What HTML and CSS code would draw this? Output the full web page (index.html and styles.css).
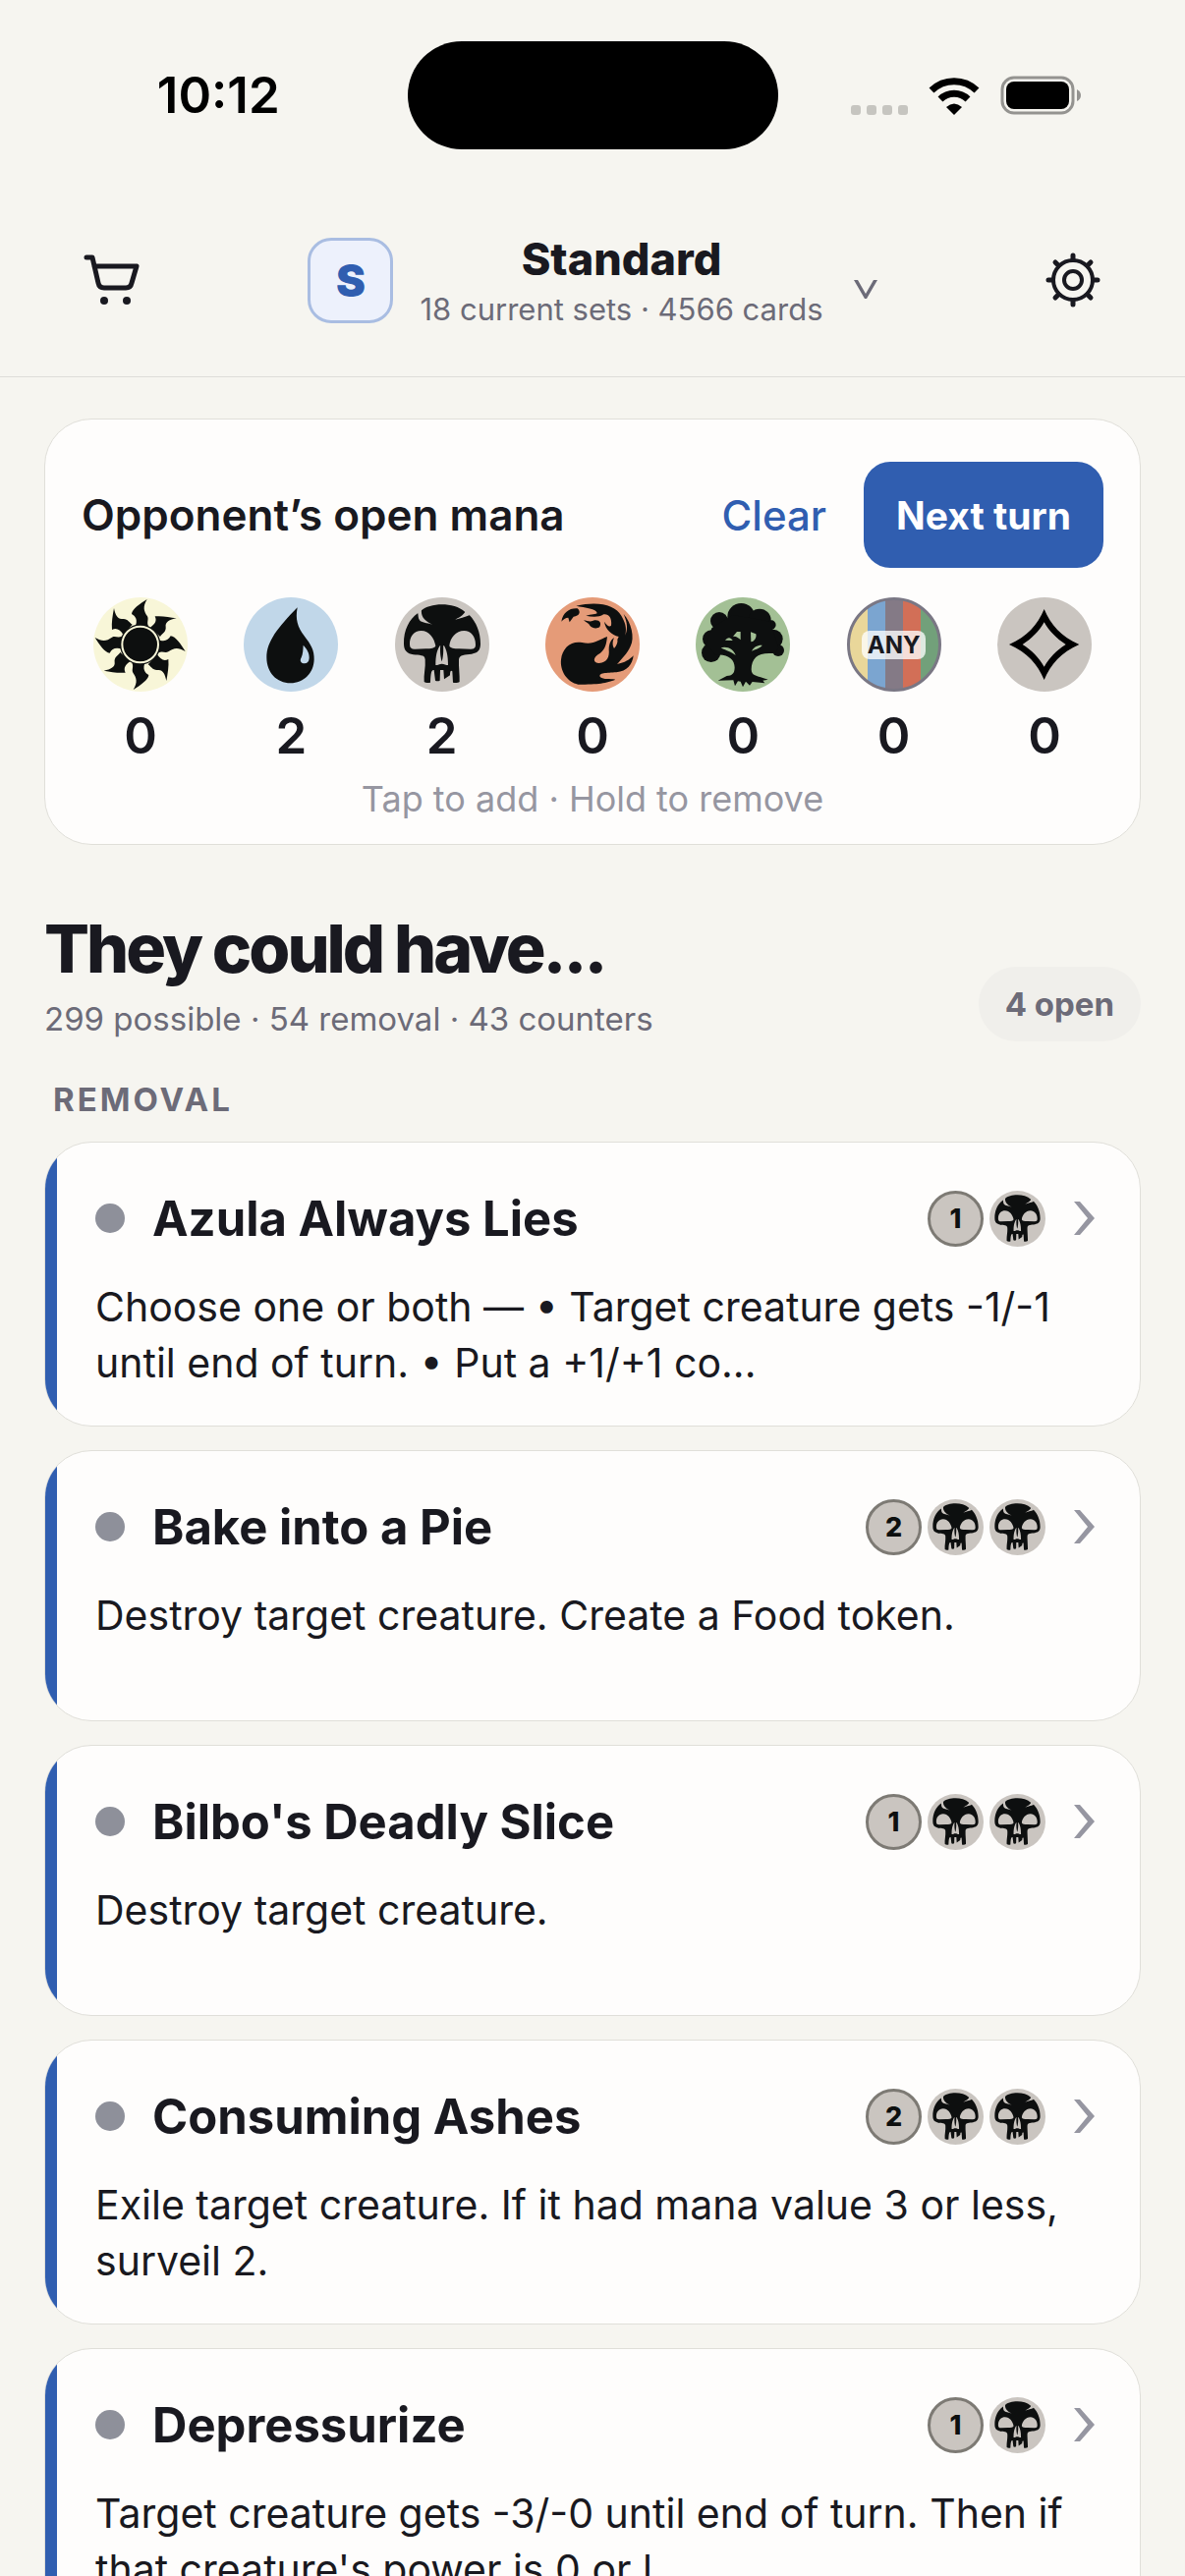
FILE: index.html
```html
<!DOCTYPE html>
<html lang="en">
  <head>
    <meta charset="UTF-8" />
    <meta name="viewport" content="width=device-width, initial-scale=1.0" />
    <title>Open Mana</title>
    <link rel="stylesheet" href="styles.css">
  </head>
  <body>
    <!-- shared mana symbols -->
    <svg class="sprite" aria-hidden="true">
      <symbol id="mana-w" viewBox="48 36 288 288">
        <circle cx="192" cy="180" r="144" fill="#f8f6d8" />
        <g fill="#0d0f0f">
          <g id="rays">
            <path d="M212 42C190 56 166 72 165 87C178 94 184 106 176 126L216 124C210 112 218 104 213 94C202 78 198 66 212 42Z" />
            <path d="M236 94C258 92 280 96 302 100C280 104 267 112 269 126C271 142 258 146 252 156L222 128C236 118 243 108 236 94Z" />
          </g>
          <use href="#rays" transform="rotate(90 191 180)" />
          <use href="#rays" transform="rotate(180 191 180)" />
          <use href="#rays" transform="rotate(270 191 180)" />
          <circle cx="191" cy="180" r="62" />
        </g>
        <circle cx="191" cy="180" r="55" fill="#0d0f0f" stroke="#f8f6d8" stroke-width="6" />
      </symbol>
      <symbol id="mana-u" viewBox="507 36 288 288">
        <circle cx="651" cy="180" r="144" fill="#c1d7e9" />
        <path fill="#0d0f0f" d="M671 67C664 104 672 128 692 154C712 180 723 198 722 226C721 268 690 298 650 298C608 298 577 266 577 220C577 170 612 128 671 67Z" />
        <path fill="#c1d7e9" d="M689 182C700 194 708 206 707 222C706 234 700 239 690 238C680 236 678 228 683 220C688 208 688 198 689 182Z" />
      </symbol>
      <symbol id="mana-b" viewBox="66 36 288 288">
        <circle cx="210" cy="180" r="144" fill="#cac5c0" />
        <path fill="#0d0f0f" d="M136 84L147 76C170 54 244 48 280 81L293 90C314 112 327 142 327 178C327 198 318 206 300 209C280 212 262 210 261 226C260 250 264 272 263 294C258 298 248 298 243 296L241 262C236 258 234 262 234 274L216 286L214 258L204 258L203 290C198 293 192 292 189 290L185 258C178 256 175 264 174 296C168 298 160 298 155 294C153 272 160 250 158 226C157 210 140 214 122 211C104 208 93 200 93 178C92 136 110 102 136 84Z" />
        <g fill="#cac5c0">
          <path d="M135 82L147 73C145 92 152 106 180 119C162 114 148 114 141 106C136 100 138 92 135 82Z" />
          <path d="M281 79L295 90C278 97 264 100 250 104C262 98 274 92 281 79Z" />
          <path d="M111 180C110 156 124 138 146 138C170 138 186 160 190 184C188 192 176 193 160 193L126 194C116 194 111 190 111 180Z" />
          <path d="M312 180C312 156 298 138 277 138C252 138 234 160 232 184C234 192 246 193 262 193L298 194C308 194 312 190 312 180Z" />
          <path d="M203 184C194 198 190 214 190 243C197 243 202 239 209 239C216 239 222 243 228 243C228 214 224 198 216 184Z" />
        </g>
        <path fill="#0d0f0f" d="M205 180C202 205 206 222 209 232C212 222 215 205 213 180Z" />
      </symbol>
      <symbol id="mana-r" viewBox="528 36 288 288">
        <circle cx="672" cy="180" r="144" fill="#e59b78" />
        <g fill="#0d0f0f">
          <path d="M622 62C690 46 742 60 760 92C770 110 778 126 772 152C783 125 774 105 767 87C790 112 802 160 788 185C780 205 760 225 747 240C770 236 786 226 797 214C794 240 778 262 745 265C715 267 688 266 696 280C706 288 725 284 742 287C715 298 690 302 628 302C596 296 572 262 576 226C580 190 606 168 640 174C675 182 690 166 717 156C714 180 712 192 696 206C670 220 674 236 692 237C718 236 724 216 722 196C722 176 730 164 738 160C732 172 733 184 738 192C746 184 750 172 748 165L752 156C730 150 712 135 708 110C716 122 724 128 729 122C732 100 722 86 706 88C690 98 670 96 652 92C668 88 684 88 686 84C684 70 650 68 622 62Z" />
          <path d="M577 110C582 82 602 68 626 70C638 80 632 94 614 95L602 112L598 98C590 98 582 104 577 110Z" />
          <path d="M645 106C656 108 668 112 678 106C694 104 700 114 694 126C684 134 672 130 664 122C662 116 652 112 645 106Z" />
        </g>
      </symbol>
      <symbol id="mana-g" viewBox="57 36 288 288">
        <circle cx="201" cy="180" r="144" fill="#a3c095" />
        <g fill="#0d0f0f">
          <circle cx="196" cy="96" r="42" />
          <circle cx="252" cy="106" r="35" />
          <circle cx="129" cy="108" r="27" />
          <circle cx="288" cy="120" r="14" />
          <circle cx="105" cy="163" r="27" />
          <circle cx="104" cy="205" r="29" />
          <circle cx="294" cy="163" r="29" />
          <circle cx="309" cy="198" r="18" />
          <path d="M106 130L170 90L285 110L310 190L300 208C250 202 228 218 227 256C227 276 245 276 262 282L278 287L262 290L268 298L230 294L222 305L210 293L201 310L194 293L186 292L177 307L172 289L125 290L152 276C168 276 176 268 176 250C176 226 156 208 118 212L90 180Z" />
        </g>
        <g fill="#a3c095">
          <path d="M134 190C154 184 174 196 179 213C166 202 152 200 134 190Z" />
          <path d="M147 167C153 160 162 154 170 168Z" />
          <path d="M171 155L183 141H194V166C188 160 182 154 171 155Z" />
          <path d="M225 142L241 148C244 158 236 172 226 172Z" />
          <path d="M228 200C234 188 246 181 260 182C256 190 242 194 228 200Z" />
        </g>
      </symbol>
      <symbol id="mana-c" viewBox="975 36 288 288">
        <circle cx="1119" cy="180" r="144" fill="#cac5c0" />
        <path fill-rule="evenodd" d="M1118 72C1138 120 1170 156 1225 180C1170 204 1138 240 1118 288C1098 240 1066 204 1011 180C1066 156 1098 120 1118 72ZM1118 112C1102 140 1080 162 1052 180C1080 198 1102 220 1118 248C1134 220 1156 198 1184 180C1156 162 1134 140 1118 112Z" />
      </symbol>
      <symbol id="chevron" viewBox="0 0 22 36">
        <path d="M0 1H6L21 18L6 35H0L14 18Z" fill="#9696a1" />
      </symbol>
    </svg>

    <div class="app">
      <div class="status-bar">
        <div class="status-time">10:12</div>
        <div class="island"></div>
        <div class="status-icons">
          <svg width="58" height="10" viewBox="0 0 58 10" fill="#c6c5c0">
            <rect width="10" height="10" rx="3" />
            <rect x="16" width="10" height="10" rx="3" />
            <rect x="32" width="10" height="10" rx="3" />
            <rect x="48" width="10" height="10" rx="3" />
          </svg>
          <svg width="52" height="38" viewBox="0 0 52 38">
            <path d="M3 13A33 33 0 0 1 49 13" fill="none" stroke="#000" stroke-width="7" />
            <path d="M12 22A20 20 0 0 1 40 22" fill="none" stroke="#000" stroke-width="7" />
            <path d="M18 30Q26 23 34 30L26 38Z" />
          </svg>
          <svg width="83" height="40" viewBox="0 0 83 40">
            <rect x="2" y="2" width="72" height="36" rx="12" fill="none" stroke="#949390" stroke-width="3" />
            <rect x="6" y="6" width="64" height="28" rx="8" />
            <path d="M78 14Q82 16 82 20T78 26Z" fill="#949390" />
          </svg>
        </div>
      </div>

      <header class="header">
        <button class="icon-button" aria-label="Shop">
          <svg width="58" height="52" viewBox="0 0 58 52" fill="none" stroke="#191920" stroke-width="5" stroke-linecap="round" stroke-linejoin="round">
            <path d="M3 3H9L15 29Q16 34 21 34H43Q48 34 49 29L54 12H11" />
            <circle cx="21" cy="47" r="4" fill="#191920" stroke="none" />
            <circle cx="44" cy="47" r="4" fill="#191920" stroke="none" />
          </svg>
        </button>
        <button class="format">
          <span class="format-badge">S</span>
          <span class="format-text">
            <span class="format-name">Standard</span>
            <span class="format-info">18 current sets · 4566 cards</span>
          </span>
          <svg class="format-arrow" width="24" height="19" viewBox="0 0 24 19">
            <path d="M0 0H4L12 14L20 0H24L13 19H11Z" fill="#6c6b78" />
          </svg>
        </button>
        <button class="icon-button" aria-label="Settings">
          <svg width="56" height="56" viewBox="-28 -28 56 56" fill="none" stroke="#191920" stroke-width="5" stroke-linecap="round">
            <circle r="20" stroke-width="4" />
            <circle r="9" stroke-width="4" />
            <path d="M0 -25V-21M0 25V21M-25 0H-21M25 0H21M-18 -18L-15 -15M18 18L15 15M-18 18L-15 15M18 -18L15 -15" />
          </svg>
        </button>
      </header>

      <main class="content">
        <section class="mana-panel">
          <div class="mana-head">
            <h2 class="mana-title">Opponent’s open mana</h2>
            <button class="clear">Clear</button>
            <button class="next-turn">Next turn</button>
          </div>
          <div class="mana-row">
            <button class="mana" aria-label="White"><svg class="mana-icon"><use href="#mana-w" /></svg><span>0</span></button>
            <button class="mana" aria-label="Blue"><svg class="mana-icon"><use href="#mana-u" /></svg><span>2</span></button>
            <button class="mana" aria-label="Black"><svg class="mana-icon"><use href="#mana-b" /></svg><span>2</span></button>
            <button class="mana" aria-label="Red"><svg class="mana-icon"><use href="#mana-r" /></svg><span>0</span></button>
            <button class="mana" aria-label="Green"><svg class="mana-icon"><use href="#mana-g" /></svg><span>0</span></button>
            <button class="mana"><span class="mana-icon mana-any"><span class="any-label">ANY</span></span><span>0</span></button>
            <button class="mana" aria-label="Colorless"><svg class="mana-icon"><use href="#mana-c" /></svg><span>0</span></button>
          </div>
          <p class="mana-hint">Tap to add · Hold to remove</p>
        </section>

        <div class="results-head">
          <div>
            <h1>They could have...</h1>
            <p class="results-info">299 possible · 54 removal · 43 counters</p>
          </div>
          <span class="open-pill">4 open</span>
        </div>

        <h3 class="group-title">REMOVAL</h3>
        <div class="card-list">
          <a class="card" href="#">
            <div class="card-head">
              <span class="dot"></span>
              <h4 class="card-name">Azula Always Lies</h4>
              <span class="cost">
                <span class="generic">1</span>
                <svg class="pip"><use href="#mana-b" /></svg>
              </span>
              <svg class="card-arrow"><use href="#chevron" /></svg>
            </div>
            <p class="card-text">Choose one or both — • Target creature gets -1/-1 until end of turn. • Put a +1/+1 co...</p>
          </a>
          <a class="card" href="#">
            <div class="card-head">
              <span class="dot"></span>
              <h4 class="card-name">Bake into a Pie</h4>
              <span class="cost">
                <span class="generic">2</span>
                <svg class="pip"><use href="#mana-b" /></svg>
                <svg class="pip"><use href="#mana-b" /></svg>
              </span>
              <svg class="card-arrow"><use href="#chevron" /></svg>
            </div>
            <p class="card-text">Destroy target creature. Create a Food token.</p>
          </a>
          <a class="card" href="#">
            <div class="card-head">
              <span class="dot"></span>
              <h4 class="card-name">Bilbo's Deadly Slice</h4>
              <span class="cost">
                <span class="generic">1</span>
                <svg class="pip"><use href="#mana-b" /></svg>
                <svg class="pip"><use href="#mana-b" /></svg>
              </span>
              <svg class="card-arrow"><use href="#chevron" /></svg>
            </div>
            <p class="card-text">Destroy target creature.</p>
          </a>
          <a class="card" href="#">
            <div class="card-head">
              <span class="dot"></span>
              <h4 class="card-name">Consuming Ashes</h4>
              <span class="cost">
                <span class="generic">2</span>
                <svg class="pip"><use href="#mana-b" /></svg>
                <svg class="pip"><use href="#mana-b" /></svg>
              </span>
              <svg class="card-arrow"><use href="#chevron" /></svg>
            </div>
            <p class="card-text">Exile target creature. If it had mana value 3 or less, surveil 2.</p>
          </a>
          <a class="card" href="#">
            <div class="card-head">
              <span class="dot"></span>
              <h4 class="card-name">Depressurize</h4>
              <span class="cost">
                <span class="generic">1</span>
                <svg class="pip"><use href="#mana-b" /></svg>
              </span>
              <svg class="card-arrow"><use href="#chevron" /></svg>
            </div>
            <p class="card-text">Target creature gets -3/-0 until end of turn. Then if that creature's power is 0 or l...</p>
          </a>
        </div>
      </main>
    </div>
  </body>
</html>
```
FILE: styles.css
```css
* {
  box-sizing: border-box;
}
body {
  margin: 0;
  background-color: #f6f5f0;
  color: #191920;
  font-family: Inter, "Liberation Sans", sans-serif;
}
h1,
h2,
h3,
h4,
p {
  margin: 0;
}
button {
  border: none;
  padding: 0;
  background: none;
  color: inherit;
  font-family: inherit;
  cursor: pointer;
}
svg {
  display: block;
}
.sprite {
  position: absolute;
  width: 0;
  height: 0;
}
.app {
  display: flex;
  flex-direction: column;
  height: 100vh;
}

/* status bar */
.status-bar {
  display: grid;
  grid-template-columns: 1fr auto 1fr;
  align-items: center;
  padding-top: 42px;
}
.status-time {
  padding-left: 30px;
  color: #000;
  font-size: 51px;
  font-weight: 600;
  line-height: 60px;
  text-align: center;
}
.island {
  width: 377px;
  height: 110px;
  border-radius: 55px;
  background-color: #000;
}
.status-icons {
  display: flex;
  align-items: flex-end;
  justify-content: flex-end;
  gap: 21px;
  padding-right: 105px;
}

/* header */
.header {
  display: flex;
  align-items: center;
  justify-content: space-between;
  padding: 76px 48px 41px;
  border-bottom: 1px solid #deddd9;
}
.icon-button {
  display: flex;
  align-items: center;
  justify-content: center;
  width: 132px;
  height: 114px;
}
.format {
  display: flex;
  align-items: center;
  gap: 27px;
}
.format-badge {
  width: 87px;
  height: 87px;
  border: 3px solid #a9bde2;
  border-radius: 24px;
  background-color: #edf1fc;
  color: #305eb0;
  font-size: 45px;
  font-weight: 900;
  line-height: 81px;
}
.format-text {
  display: flex;
  flex-direction: column;
  padding-top: 5px;
}
.format-name {
  font-size: 45px;
  font-weight: 800;
  line-height: 54px;
}
.format-info {
  color: #6c6b78;
  font-size: 31px;
  line-height: 48px;
}
.format-arrow {
  margin: 18px 0 0 4px;
}

.content {
  flex: 1;
  min-height: 0;
  padding: 42px 45px 0;
  overflow: hidden;
}

/* mana panel */
.mana-panel {
  padding: 43px 37px 22px;
  border: 1px solid #e0dfd9;
  border-radius: 48px;
  background-color: #fefdfc;
}
.mana-head {
  display: flex;
  align-items: center;
}
.mana-title {
  flex: 1;
  font-size: 44px;
  font-weight: 600;
}
.clear {
  padding: 0 38px;
  color: #305eb0;
  font-size: 42px;
  font-weight: 500;
}
.next-turn {
  height: 108px;
  padding: 0 33px;
  border-radius: 27px;
  background-color: #305eb0;
  color: #fff;
  font-size: 39px;
  font-weight: 700;
}
.mana-row {
  display: flex;
  justify-content: space-between;
  margin-top: 30px;
}
.mana {
  display: flex;
  flex-direction: column;
  align-items: center;
  gap: 15px;
  width: 120px;
  font-size: 51px;
  font-weight: 600;
  line-height: 60px;
}
.mana-icon {
  width: 96px;
  height: 96px;
}
.mana-any {
  display: flex;
  align-items: center;
  justify-content: center;
  border: 3px solid #7a7784;
  border-radius: 50%;
  background: linear-gradient(
    90deg,
    #e9d79a 20%,
    #7ba5d0 20% 40%,
    #847a86 40% 60%,
    #d26f57 60% 80%,
    #72a07a 80%
  );
}
.any-label {
  width: 65px;
  border-radius: 8px;
  background-color: rgba(255, 255, 255, 0.77);
  font-size: 24px;
  font-weight: 700;
  line-height: 29px;
}
.mana-hint {
  margin-top: 10px;
  color: #9696a1;
  font-size: 36px;
  line-height: 48px;
  text-align: center;
}

/* results */
.results-head {
  display: flex;
  align-items: flex-end;
  justify-content: space-between;
  margin-top: 62px;
}
h1 {
  font-size: 68px;
  font-weight: 800;
  letter-spacing: -3px;
  line-height: 86px;
}
.results-info {
  margin-top: 6px;
  color: #6c6b78;
  font-size: 33px;
  line-height: 46px;
}
.open-pill {
  padding: 0 27px;
  border-radius: 38px;
  background-color: #f0efeb;
  color: #6c6b78;
  font-size: 33px;
  font-weight: 700;
  line-height: 76px;
}
.group-title {
  margin: 36px 9px 20px;
  color: #6c6b78;
  font-size: 33px;
  font-weight: 700;
  letter-spacing: 3px;
  line-height: 46px;
}
.card-list {
  display: flex;
  flex-direction: column;
  gap: 24px;
}
.card {
  position: relative;
  min-height: 276px;
  padding: 35px 45px 35px 51px;
  border: 1px solid #e0dfd9;
  border-radius: 48px;
  background-color: #fefdfc;
  color: inherit;
  text-decoration: none;
  overflow: hidden;
}
.card::before {
  content: "";
  position: absolute;
  top: 0;
  bottom: 0;
  left: 0;
  width: 12px;
  background-color: #305eb0;
}
.card-head {
  display: flex;
  align-items: center;
  height: 84px;
}
.dot {
  width: 30px;
  height: 30px;
  border-radius: 50%;
  background-color: #8e909a;
}
.card-name {
  flex: 1;
  margin-left: 28px;
  font-size: 49px;
  font-weight: 700;
}
.cost {
  display: flex;
  gap: 6px;
}
.pip,
.generic {
  width: 57px;
  height: 57px;
}
.generic {
  border: 3px solid #7d7a74;
  border-radius: 50%;
  background-color: #cac5c0;
  color: #0d0f0f;
  font-size: 27px;
  font-weight: 800;
  line-height: 51px;
  text-align: center;
}
.card-arrow {
  width: 22px;
  height: 36px;
  margin-left: 29px;
}
.card-text {
  margin-top: 20px;
  font-size: 41px;
  line-height: 57px;
}
```
